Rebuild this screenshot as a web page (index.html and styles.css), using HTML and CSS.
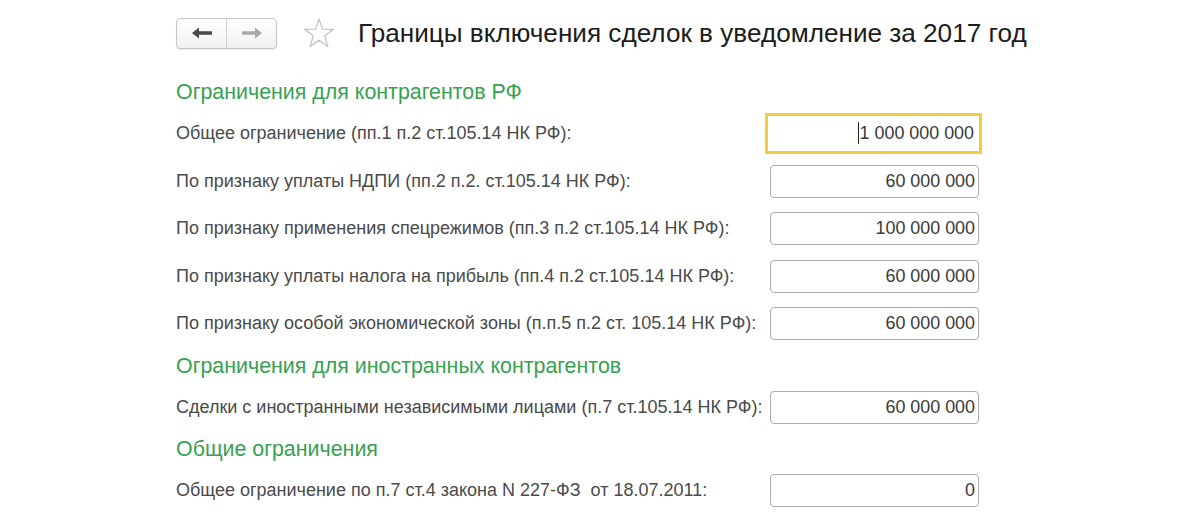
FILE: index.html
```html
<!DOCTYPE html>
<html lang="ru">
<head>
<meta charset="utf-8">
<title>Границы включения сделок</title>
<link rel="stylesheet" href="styles.css">
</head>
<body>
<div class="page">
  <div class="toolbar">
    <div class="nav">
      <div class="nav-btn nav-back">
        <svg width="22" height="12" viewBox="0 0 22 12"><path d="M1 6 L8 0.5 L8 4.3 L21 4.3 L21 7.7 L8 7.7 L8 11.5 Z" fill="#4a4a4a"/></svg>
      </div>
      <div class="nav-btn nav-fwd">
        <svg width="22" height="12" viewBox="0 0 22 12"><path d="M21 6 L14 0.5 L14 4.3 L1 4.3 L1 7.7 L14 7.7 L14 11.5 Z" fill="#a8a8a8"/></svg>
      </div>
    </div>
    <svg class="star" width="32" height="31" viewBox="0 0 32 31"><polygon points="16,1 19.53,11.15 30.27,11.36 21.71,17.85 24.82,28.6 16,22.3 7.18,28.6 10.29,17.85 1.73,11.36 12.47,11.15" fill="#fff" stroke="#c4c4c4" stroke-width="1.3" stroke-linejoin="round"/></svg>
    <h1 class="title">Границы включения сделок в уведомление за 2017 год</h1>
  </div>

  <div class="form">
    <div class="section-title">Ограничения для контрагентов РФ</div>
    <div class="row">
      <div class="label">Общее ограничение (пп.1 п.2 ст.105.14 НК РФ):</div>
      <div class="field focused"><span class="caret"></span>1 000 000 000</div>
    </div>
    <div class="row">
      <div class="label">По признаку уплаты НДПИ (пп.2 п.2. ст.105.14 НК РФ):</div>
      <div class="field">60 000 000</div>
    </div>
    <div class="row">
      <div class="label">По признаку применения спецрежимов (пп.3 п.2 ст.105.14 НК РФ):</div>
      <div class="field">100 000 000</div>
    </div>
    <div class="row">
      <div class="label">По признаку уплаты налога на прибыль (пп.4 п.2 ст.105.14 НК РФ):</div>
      <div class="field">60 000 000</div>
    </div>
    <div class="row">
      <div class="label">По признаку особой экономической зоны (п.п.5 п.2 ст. 105.14 НК РФ):</div>
      <div class="field">60 000 000</div>
    </div>

    <div class="section-title">Ограничения для иностранных контрагентов</div>
    <div class="row">
      <div class="label">Сделки с иностранными независимыми лицами (п.7 ст.105.14 НК РФ):</div>
      <div class="field">60 000 000</div>
    </div>

    <div class="section-title">Общие ограничения</div>
    <div class="row">
      <div class="label">Общее ограничение по п.7 ст.4 закона N 227-ФЗ &nbsp;от 18.07.2011:</div>
      <div class="field">0</div>
    </div>
  </div>
</div>
</body>
</html>
```

FILE: styles.css
```css
html, body {
  margin: 0;
  padding: 0;
  background: #ffffff;
}

body {
  font-family: "Liberation Sans", Arial, sans-serif;
  color: #4a4a4a;
}

.page {
  padding: 17px 0 0 176px;
}

.toolbar {
  display: flex;
  align-items: center;
  height: 32px;
}

.nav {
  display: flex;
  width: 101px;
  height: 31px;
  box-sizing: border-box;
  border: 1px solid #c6c6c6;
  border-radius: 4px;
  background: linear-gradient(#ffffff, #f1f1f1);
  box-shadow: 0 1px 1px rgba(0, 0, 0, 0.08);
}

.nav-btn {
  flex: 1;
  display: flex;
  align-items: center;
  justify-content: center;
}

.nav-back {
  border-right: 1px solid #d0d0d0;
}

.star {
  margin-left: 26px;
  display: block;
}

.title {
  margin: 0 0 0 23px;
  font-size: 26.15px;
  font-weight: normal;
  color: #1c1c1c;
  line-height: 32px;
  white-space: nowrap;
}

.form {
  margin-top: 25px;
}

.section-title {
  height: 36px;
  line-height: 36px;
  font-size: 21.4px;
  color: #36a150;
  white-space: nowrap;
}

.row {
  display: grid;
  grid-template-columns: 594px 209px;
  align-items: center;
  height: 47.5px;
}

.label {
  font-size: 18px;
  white-space: nowrap;
  color: #4a4a4a;
}

.field {
  height: 33px;
  box-sizing: border-box;
  border: 1px solid #aaaaaa;
  border-radius: 4px;
  padding-right: 3px;
  text-align: right;
  font-size: 17.9px;
  line-height: 31px;
  color: #3a3a3a;
  background: #fff;
}

.field.focused {
  margin: 0 -3px 0 -5px;
  height: 41px;
  border: 3px solid #f4cd3a;
  border-radius: 0;
  padding-right: 5px;
  line-height: 35px;
}

.caret {
  display: inline-block;
  width: 1px;
  height: 22px;
  background: #222;
  vertical-align: -5px;
  margin-right: 1px;
}
```
